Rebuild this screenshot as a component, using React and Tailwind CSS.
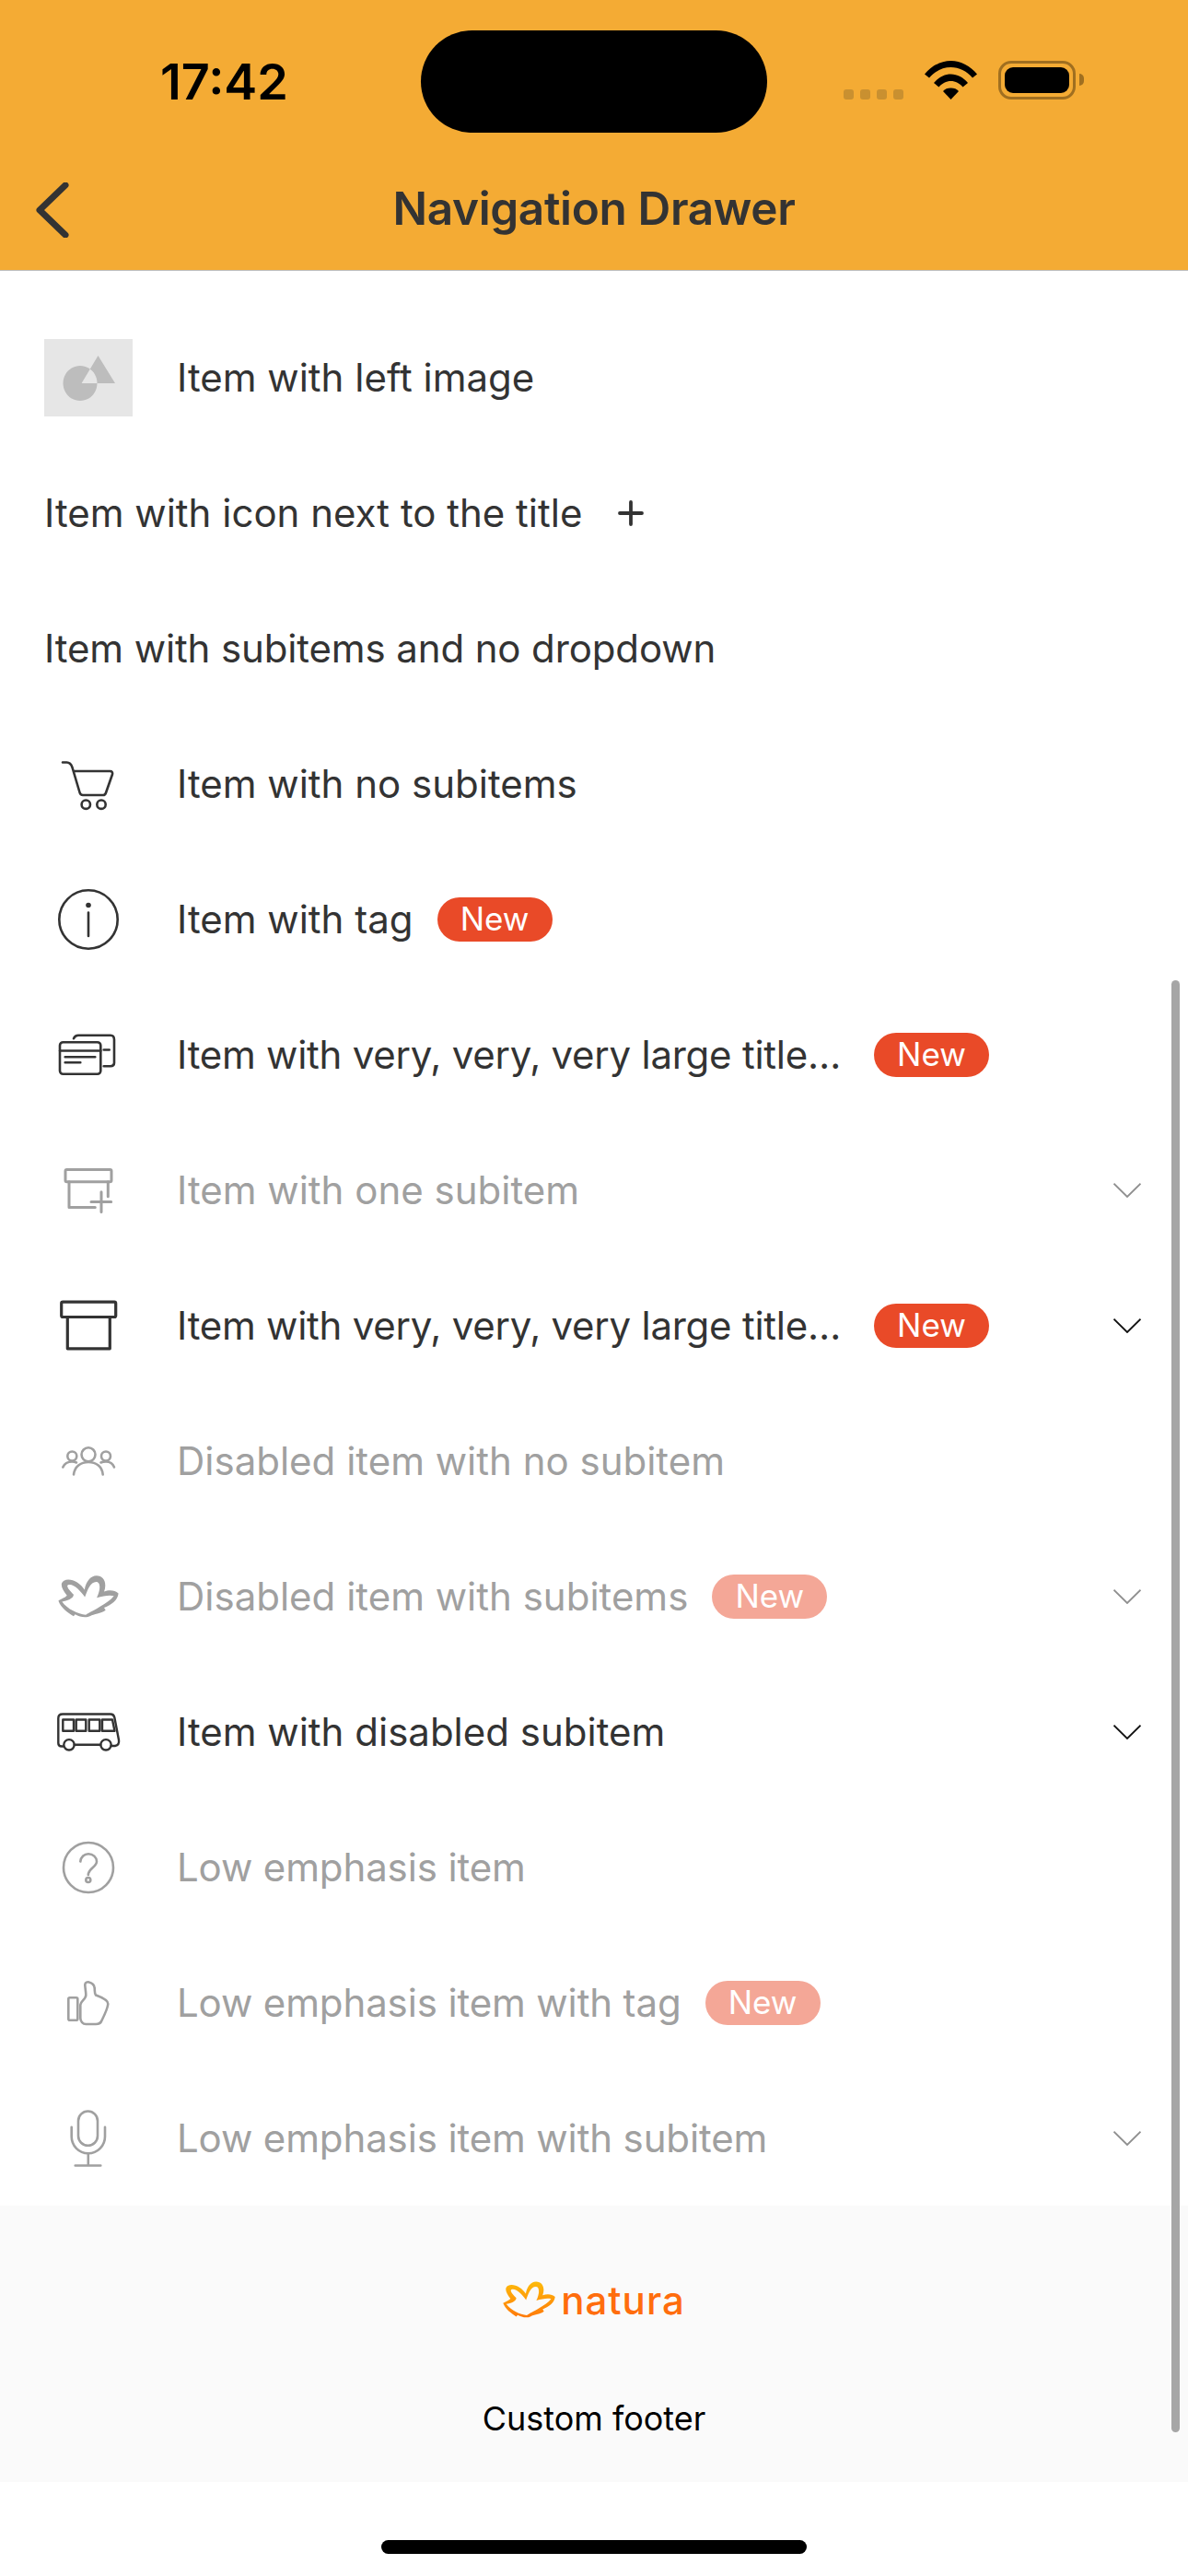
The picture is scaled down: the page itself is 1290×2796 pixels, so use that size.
import React from 'react';

const DARK = '#333333';
const MUTED = '#a0a0a0';

const Svg = ({ color, width = 2.6, children }) => (
    <svg viewBox="0 0 96 96" className="w-[96px] h-[96px]" fill="none" stroke={color} strokeWidth={width} strokeLinecap="round" strokeLinejoin="round">
        {children}
    </svg>
);

const flowerPath = 'M100 412C112 405 125 400 128 395C112 375 103 355 118 346C140 336 170 352 186 376C190 350 205 330 225 330C250 330 260 355 250 382C265 376 285 376 297 388C295 410 275 425 250 435L255 443C240 455 215 455 205 462C190 470 170 465 155 457L150 463C130 450 108 435 100 412ZM112 415C128 413 150 405 150 392C136 378 124 364 132 360C148 354 172 378 187 400C195 378 205 350 224 350C240 350 238 378 226 402C248 396 268 392 282 396C272 410 255 420 238 430C215 445 200 450 190 458C165 455 130 440 112 415Z';

const ImageIcon = () => (
    <div className="w-[96px] h-[84px] bg-[#e6e6e6]">
        <svg viewBox="0 0 96 84" className="w-[96px] h-[84px]">
            <path fillRule="evenodd" fill="#bdbdbd" d="M39 29a18.500 19 0 1 0 .01 0ZM58.500 18L40.600 48H77Z" />
        </svg>
    </div>
);

const CartIcon = ({ color }) => (
    <Svg color={color}>
        <path d="M20 24.500H24.500C27.500 24.500 29.500 27 30.500 30L38.500 57C39 59 40 60 42 60H64C65.500 60 66.500 59 67 57.500L74 37.500C74.600 35.300 73.500 34 71.500 34H32" />
        <circle cx="45.300" cy="70.200" r="4.700" />
        <circle cx="62" cy="70.200" r="4.700" />
    </Svg>
);

const InfoIcon = ({ color }) => (
    <Svg color={color}>
        <circle cx="48" cy="48" r="31.700" />
        <path d="M48 40.500V66" />
        <circle cx="48" cy="32.500" r="2.800" fill={color} stroke="none" />
    </Svg>
);

const CardsIcon = ({ color }) => (
    <Svg color={color}>
        <rect x="17" y="34.200" width="44.300" height="34.600" rx="3.500" />
        <path d="M17 43.500H61.300M22.700 50.200H55.300M22.700 56.200H39.300" />
        <path d="M32 30.200C33 28 35 26.800 37 26.800H72C74.500 26.800 76 28.500 76 31.500V56.800C76 59 74.500 60.200 72 60.200H64.700M64.700 42.500H70.700" />
    </Svg>
);

const ArchivePlusIcon = ({ color }) => (
    <Svg color={color} width={3}>
        <rect x="23" y="25.500" width="50" height="13.300" rx="1.500" />
        <path d="M27 38.800V66.500H55.300M69.300 38.800V54.800M51 60.500H72.700M62 49.800V71.500" />
    </Svg>
);

const ArchiveIcon = ({ color }) => (
    <Svg color={color} width={3.2}>
        <rect x="18.700" y="22.200" width="59" height="16.300" rx="1.500" />
        <path d="M25.300 38.500V72.800H71.300V38.500" />
    </Svg>
);

const PeopleIcon = ({ color }) => (
    <Svg color={color} width={2.6}>
        <circle cx="48" cy="40.800" r="7.500" />
        <circle cx="30.300" cy="42.500" r="5" />
        <circle cx="67" cy="42.500" r="5" />
        <path d="M32 62.500C33 54 39.500 49 48 49C56.500 49 63 54 63.700 62.500" />
        <path d="M20.300 54.500C22 50.500 26 48.500 30.300 48.500C32 48.500 33.500 48.800 35 49.500M61.500 49.500C63 48.800 65 48.500 67 48.500C71 48.500 74.500 50.500 76 54.500" />
    </Svg>
);

const FlowerIcon = ({ color }) => (
    <svg viewBox="99 329 199 139" className="w-[66px] h-[46px]">
        <path fill={color} fillRule="evenodd" d={flowerPath} />
    </svg>
);

const BusIcon = ({ color }) => (
    <Svg color={color} width={2.4}>
        <path d="M21 63.500H19C16.500 63.500 15.300 62 15.300 60V33C15.300 30 17 28.500 20 28.500H72C74.500 28.500 75.800 30 76.300 32L81 56.500C81.500 60 80 62.500 77 63H72.700" />
        <path d="M32.700 61.800H61.300" />
        <circle cx="27" cy="61.800" r="5.700" />
        <circle cx="67" cy="61.800" r="5.700" />
        <path d="M20.300 34.500H32V46.800H20.300ZM34.700 34.500H45.300V46.800H34.700ZM48.700 34.500H60.300V46.800H48.700ZM63 34.500H74L76.500 46.800H63Z" />
    </Svg>
);

const QuestionIcon = ({ color }) => (
    <Svg color={color} width={2.6}>
        <circle cx="48" cy="48" r="27" />
        <path d="M39.300 41.500C39.800 36.500 43.500 33.200 48 33.200C53 33.200 57 36.800 57 41.500C57 47.500 48 48.500 47.800 56" />
        <circle cx="47.800" cy="61.500" r="2.500" />
    </Svg>
);

const ThumbIcon = ({ color }) => (
    <Svg color={color} width={2.6}>
        <rect x="26.300" y="42.200" width="10" height="24.600" rx="1.500" />
        <path d="M39.300 64.500V50C39.300 46 45.300 44 45.300 39.500C45.300 35 44.300 32 44.300 28C44.500 25.500 47 25 48.700 25.500C52.500 26.500 54.500 29 54.700 32C55 35 54.500 38 56 39.500C60 41 69.500 44.500 69.300 49C69 53 65 62 62.500 67C61.500 70 59 71 56 71H45.300C42 71 39.300 68 39.300 64.500Z" />
    </Svg>
);

const MicIcon = ({ color }) => (
    <Svg color={color} width={2.6}>
        <rect x="37" y="18.500" width="21" height="37.300" rx="10.500" />
        <path d="M29.700 35.800V46C29.700 56 37.500 64.200 47.800 64.200C58 64.200 66 56 66 46V35.800" />
        <path d="M47.800 64.200V77.500M33.700 77.500H61.300" />
    </Svg>
);

const Tag = ({ faded }) => (
    <span className={`ml-[26px] shrink-0 w-[125px] h-[48px] rounded-full flex items-center justify-center text-white text-[35px] ${faded ? 'bg-[#f4a797]' : 'bg-[#e94a28]'}`}>
        New
    </span>
);

const Chevron = ({ color }) => (
    <svg viewBox="0 0 30 16" className="w-[30px] h-[16px] ml-auto mr-[51px] shrink-0" fill="none" stroke={color} strokeWidth="1.800">
        <path d="M0.500 0.700L15 15L29.500 0.700" />
    </svg>
);

const rows = [
    { icon: ImageIcon, label: 'Item with left image' },
    { label: 'Item with icon next to the title', plus: true },
    { label: 'Item with subitems and no dropdown', tight: true },
    { icon: CartIcon, label: 'Item with no subitems' },
    { icon: InfoIcon, label: 'Item with tag', tag: true },
    { icon: CardsIcon, label: 'Item with very, very, very large title…', tag: true, long: true },
    { icon: ArchivePlusIcon, label: 'Item with one subitem', muted: true, chevron: true },
    { icon: ArchiveIcon, label: 'Item with very, very, very large title…', tag: true, long: true, chevron: true },
    { icon: PeopleIcon, label: 'Disabled item with no subitem', muted: true },
    { icon: FlowerIcon, label: 'Disabled item with subitems', muted: true, tag: true, chevron: true },
    { icon: BusIcon, label: 'Item with disabled subitem', chevron: true },
    { icon: QuestionIcon, label: 'Low emphasis item', muted: true, tight: true },
    { icon: ThumbIcon, label: 'Low emphasis item with tag', muted: true, tag: true, tight: true },
    { icon: MicIcon, label: 'Low emphasis item with subitem', muted: true, chevron: true, tight: true },
];

const Row = ({ icon: Icon, label, muted, tag, long, tight, plus, chevron }) => {
    const color = muted ? MUTED : DARK;
    return (
        <div className="h-[147px] flex items-center pl-[48px]">
            {Icon && (
                <div className="w-[96px] mr-[48px] shrink-0 flex justify-center">
                    <Icon color={color} />
                </div>
            )}
            <span className={`text-[42px] leading-[56px] whitespace-nowrap ${muted ? 'text-[#a0a0a0]' : 'text-[#333333]'} ${long ? 'w-[731px] tracking-[-0.25px]' : ''} ${tight ? 'tracking-[-0.13px]' : ''}`}>
                {label}
            </span>
            {plus && (
                <svg viewBox="0 0 28 28" className="w-[28px] h-[28px] ml-[39px]" fill="none" stroke={DARK} strokeWidth="3.800" strokeLinecap="round">
                    <path d="M2 14H26M14 2V26" />
                </svg>
            )}
            {tag && <Tag faded={muted} />}
            {chevron && <Chevron color={muted ? '#8f8f8f' : '#111111'} />}
        </div>
    );
};

const App = () => {
    return (
        <div className="relative w-[1290px] h-[2796px] bg-white overflow-hidden flex flex-col font-['Inter',sans-serif]">
            <header className="h-[294px] shrink-0 bg-[#f4ab34] border-b border-[#bdbdbd] pt-[33px]">
                <div className="h-[111px] flex items-center pl-[174px]">
                    <span className="w-[283px] text-[54px] font-semibold leading-none text-black">17:42</span>
                    <div className="w-[376px] h-[111px] rounded-full bg-black" />
                    <div className="ml-[83px] w-[65px] h-[42px] flex items-end justify-between -mt-[4px]">
                        <i className="w-[11px] h-[11px] rounded-[3px] bg-[#c99030]" />
                        <i className="w-[11px] h-[11px] rounded-[3px] bg-[#c99030]" />
                        <i className="w-[11px] h-[11px] rounded-[3px] bg-[#c99030]" />
                        <i className="w-[11px] h-[11px] rounded-[3px] bg-[#c99030]" />
                    </div>
                    <svg viewBox="0 0 57 42" className="ml-[23px] w-[57px] h-[42px] -mt-[4px]">
                        <path d="M0 14.500C7.500 5.500 17.500 0 28.500 0C39.500 0 49.500 5.500 57 14.500L52 18.500C45.500 11 37.500 7 28.500 7C19.500 7 11.500 11 5 18.500Z" />
                        <path d="M10 24C15 18 21.500 14.500 28.500 14.500C35.500 14.500 42 18 47 24L41.500 28.500C38 24.500 33.500 22 28.500 22C23.500 22 19 24.500 15.500 28.500Z" />
                        <path d="M20 33C22 30.500 25 29.500 28.500 29.500C32 29.500 35 30.500 37 33L28.500 42Z" />
                    </svg>
                    <div className="ml-[23px] w-[84px] h-[42px] -mt-[4px] rounded-[14px] border-[3px] border-[#a06f20] p-[4px]">
                        <div className="w-full h-full rounded-[9px] bg-black" />
                    </div>
                    <div className="ml-[4px] w-[5px] h-[13px] -mt-[4px] rounded-r-full bg-[#a06f20]" />
                </div>
                <div className="mt-[42px] h-[84px] grid grid-cols-[1fr_auto_1fr] items-center">
                    <svg viewBox="0 0 40 60" className="ml-[36px] w-[40px] h-[60px]" fill="none" stroke={DARK} strokeWidth="7" strokeLinecap="round" strokeLinejoin="round">
                        <path d="M35 3L7 30L35 57" />
                    </svg>
                    <h1 className="-mt-[2px] text-[49.500px] font-semibold tracking-[-0.35px] leading-none text-[#333333]">Navigation Drawer</h1>
                    <div />
                </div>
            </header>

            <main className="flex-1 pt-[42px]">
                {rows.map((row, i) => (
                    <Row key={i} {...row} />
                ))}
            </main>

            <footer className="h-[300px] shrink-0 bg-[#fafafa] flex flex-col items-center pt-[82px]">
                <div className="h-[40px] flex items-end">
                    <svg viewBox="99 329 199 139" className="w-[57px] h-[40px]">
                        <defs>
                            <linearGradient id="natura-petal" x1="0" y1="0" x2="0" y2="1">
                                <stop offset="0" stopColor="#fdbb0a" />
                                <stop offset="1" stopColor="#ff7a0a" />
                            </linearGradient>
                        </defs>
                        <path fill="url(#natura-petal)" fillRule="evenodd" d={flowerPath} />
                    </svg>
                    <span className="ml-[6px] text-[42px] leading-[38px] font-medium tracking-[1px] text-[#ff6d0d]">natura</span>
                </div>
                <p className="mt-[87px] text-[36px] leading-[44px] text-black">Custom footer</p>
            </footer>

            <div className="h-[102px] shrink-0 flex justify-center pt-[63px]">
                <div className="w-[462px] h-[15px] rounded-full bg-black" />
            </div>

            {/* scrollbar sits over the list */}
            <div className="absolute left-[1272px] top-[1064px] w-[9px] h-[1576px] rounded-full bg-[#a6a6a6]" />
        </div>
    );
};

export default App;
